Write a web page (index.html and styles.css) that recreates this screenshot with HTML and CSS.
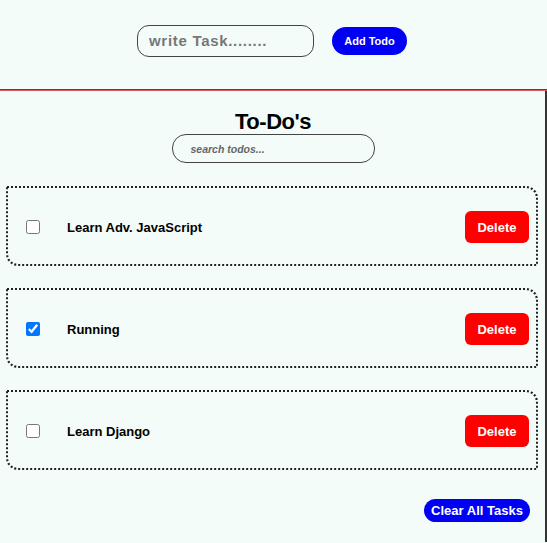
FILE: index.html
```html
<!DOCTYPE html>
<html>
<head>
<meta charset="utf-8">
<link rel="stylesheet" href="styles.css">
</head>
<body>
<header class="top">
  <input class="task-input" type="text" placeholder="write Task........">
  <button class="add-btn">Add Todo</button>
</header>
<hr class="divider">
<main class="main">
  <h1 class="title">To-Do's</h1>
  <div class="search-wrap"><input class="search" type="text" placeholder="search todos..."></div>
  <div class="list">
    <div class="card">
      <input class="check" type="checkbox">
      <span class="task">Learn Adv. JavaScript</span>
      <button class="del">Delete</button>
    </div>
    <div class="card">
      <input class="check" type="checkbox" checked>
      <span class="task">Running</span>
      <button class="del">Delete</button>
    </div>
    <div class="card">
      <input class="check" type="checkbox">
      <span class="task">Learn Django</span>
      <button class="del">Delete</button>
    </div>
  </div>
  <div class="footer"><button class="clear">Clear All Tasks</button></div>
</main>
</body>
</html>
```
FILE: styles.css
```css
html, body {
  margin: 0;
  padding: 0;
  background: #f3fcf8;
  font-family: "Liberation Sans", Arial, sans-serif;
}
.top {
  display: flex;
  justify-content: center;
  align-items: center;
  gap: 18px;
  height: 81px;
  padding-right: 3px;
}
.task-input {
  width: 177px;
  height: 32px;
  box-sizing: border-box;
  border: 1px solid #444;
  border-radius: 12px;
  background: #f3fcf8;
  padding: 0 11px;
  font-family: inherit;
  font-weight: bold;
  font-size: 15px;
  letter-spacing: 0.7px;
  outline: none;
}
.task-input::placeholder { color: #777; }
.add-btn {
  width: 75px;
  height: 28px;
  border: none;
  border-radius: 14px;
  background: #0000f5;
  color: #fff;
  font-family: inherit;
  font-weight: bold;
  font-size: 11px;
  padding: 0;
}
.divider {
  margin: 8px 0 0;
  height: 0;
  border: none;
  border-top: 1px solid #4a4a4a;
  border-bottom: 1px solid #d65a5a;
}
.main {
  border-right: 2px solid #333;
  padding: 19px 7px 20px 6px;
}
.title {
  margin: 0;
  text-align: center;
  font-size: 22px;
  letter-spacing: -0.5px;
  line-height: 24px;
  padding-left: 2px;
}
.search-wrap {
  display: flex;
  justify-content: center;
  padding-left: 2px;
}
.search {
  width: 203px;
  height: 29px;
  box-sizing: border-box;
  border: 1px solid #444;
  border-radius: 14px;
  background: #f3fcf8;
  padding: 0 10px 0 18px;
  font-family: inherit;
  font-weight: bold;
  font-style: italic;
  font-size: 10.5px;
  outline: none;
}
.search::placeholder { color: #666; }
.list {
  display: flex;
  flex-direction: column;
  gap: 22px;
  margin-top: 23px;
}
.card {
  display: flex;
  align-items: center;
  height: 80px;
  box-sizing: border-box;
  border: 2px dotted #222;
  border-radius: 0 12px 0 12px;
  padding: 0 7px 0 18px;
}
.check {
  width: 14px;
  height: 14px;
  margin: 2px 0 0;
}
.task {
  margin-left: 27px;
  font-weight: bold;
  font-size: 13px;
  flex: 1;
  padding-top: 2px;
}
.del {
  width: 64px;
  height: 32px;
  border: none;
  border-radius: 6px;
  background: #ff0000;
  color: #fff;
  font-family: inherit;
  font-weight: bold;
  font-size: 13px;
  padding: 0;
  margin-top: 2px;
}
.footer {
  display: flex;
  justify-content: flex-end;
  margin-top: 29px;
  padding-right: 8px;
}
.clear {
  width: 106px;
  height: 23px;
  border: none;
  border-radius: 12px;
  background: #0000f5;
  color: #fff;
  font-family: inherit;
  font-weight: bold;
  font-size: 13px;
  padding: 0;
}
```
